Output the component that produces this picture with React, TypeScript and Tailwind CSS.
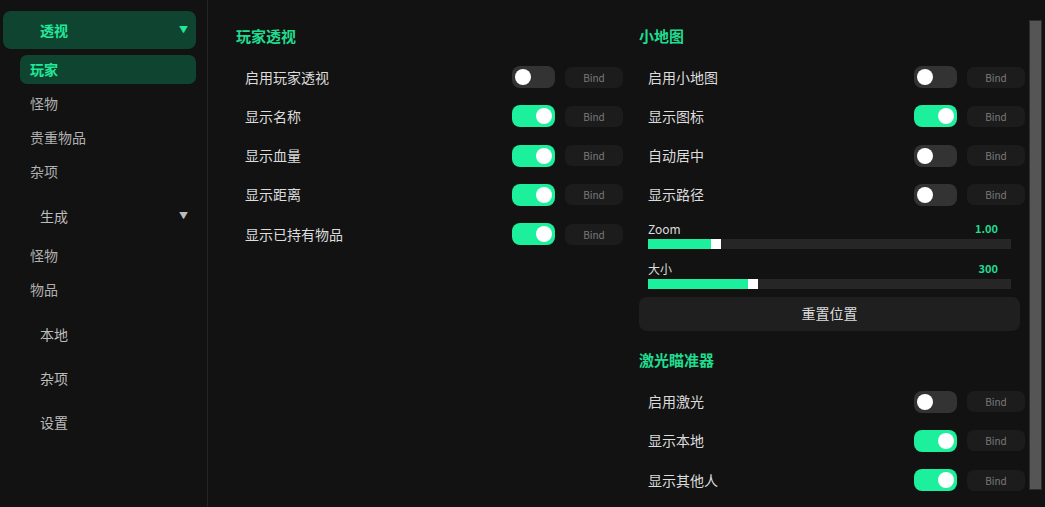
import React from "react";

const font = { fontFamily: '"Noto Sans CJK SC", "Noto Sans", sans-serif' };

function Toggle({ on }: { on: boolean }) {
  return (
    <div
      className={`relative w-[43px] h-[22px] rounded-[8px] ${on ? "bg-[#1cf09c]" : "bg-[#333333]"}`}
    >
      <div
        className={`absolute top-[3px] w-[16px] h-[16px] rounded-full bg-white ${on ? "left-[24px]" : "left-[3px]"}`}
      />
    </div>
  );
}

function Row({ label, on }: { label: string; on: boolean }) {
  return (
    <div className="h-[39.25px] flex items-center pl-[9px]">
      <span className="flex-1 text-[14px] text-[#dcdcdc]">{label}</span>
      <Toggle on={on} />
      <div className="ml-[10px] w-[58px] h-[21px] rounded-[7px] bg-[#1c1c1c] flex items-center justify-center text-[10px] text-[#7a7a7a]">
        Bind
      </div>
    </div>
  );
}

function Heading({ children }: { children: React.ReactNode }) {
  return (
    <div className="h-[24px] mb-[9.5px] flex items-center text-[15px] font-bold text-[#1fdc8f]">
      {children}
    </div>
  );
}

function Slider({ label, value, pct }: { label: string; value: string; pct: number }) {
  return (
    <div className="pl-[9px] pr-[14px]">
      <div className="h-[16px] flex items-center justify-between pr-[13px]">
        <span className="text-[12px] text-[#dcdcdc]">{label}</span>
        <span className="text-[11px] font-bold text-[#1fdc8f]">{value}</span>
      </div>
      <div className="mt-[2px] h-[10px] bg-[#262626] flex">
        <div className="h-full bg-[#1cf09c]" style={{ width: `${pct}%` }} />
        <div className="h-full w-[10px] bg-white" />
      </div>
    </div>
  );
}

function TopItem({ label, open, active }: { label: string; open?: boolean; active?: boolean }) {
  return (
    <div
      className={`h-[38px] flex items-center pl-[37px] pr-[8px] rounded-[8px] ${active ? "bg-[#0f4530] text-[#22e89b] font-bold" : "text-[#bdbdbd]"}`}
    >
      <span className="flex-1 text-[14px]">{label}</span>
      {open !== undefined && <span className="text-[9px]">▼</span>}
    </div>
  );
}

function SubItem({ label, active }: { label: string; active?: boolean }) {
  return (
    <div
      className={`h-[29px] flex items-center pl-[10px] rounded-[7px] text-[14px] ${active ? "bg-[#0f4530] text-[#22e89b] font-bold" : "text-[#b0b0b0]"}`}
    >
      {label}
    </div>
  );
}

export default function App() {
  return (
    <div className="w-[1045px] h-[507px] flex bg-[#121212] overflow-hidden" style={font}>
      {/* Sidebar */}
      <div className="w-[208px] shrink-0 border-r border-[#252525] pt-[11px] pl-[3px] pr-[11px] flex flex-col gap-[6px]">
        <TopItem label="透视" open active />
        <div className="flex flex-col gap-[5px] pl-[17px] mb-[5px]">
          <SubItem label="玩家" active />
          <SubItem label="怪物" />
          <SubItem label="贵重物品" />
          <SubItem label="杂项" />
        </div>
        <TopItem label="生成" open />
        <div className="flex flex-col gap-[5px] pl-[17px] mb-[5px]">
          <SubItem label="怪物" />
          <SubItem label="物品" />
        </div>
        <TopItem label="本地" />
        <TopItem label="杂项" />
        <TopItem label="设置" />
      </div>

      {/* Main */}
      <div className="flex-1 flex pl-[28px]">
        <div className="w-[387px] pt-[24px]">
          <Heading>玩家透视</Heading>
          <Row label="启用玩家透视" on={false} />
          <Row label="显示名称" on />
          <Row label="显示血量" on />
          <Row label="显示距离" on />
          <Row label="显示已持有物品" on />
        </div>

        <div className="w-[386px] ml-[16px] pt-[24px]">
          <Heading>小地图</Heading>
          <Row label="启用小地图" on={false} />
          <Row label="显示图标" on />
          <Row label="自动居中" on={false} />
          <Row label="显示路径" on={false} />
          <div className="mt-[6px]">
            <Slider label="Zoom" value="1.00" pct={17.4} />
          </div>
          <div className="mt-[12px]">
            <Slider label="大小" value="300" pct={27.5} />
          </div>
          <div className="mt-[8px] mr-[5px] h-[34px] rounded-[8px] bg-[#1f1f1f] flex items-center justify-center text-[14px] text-[#dcdcdc]">
            重置位置
          </div>
          <div className="mt-[18px]">
            <Heading>激光瞄准器</Heading>
          </div>
          <Row label="启用激光" on={false} />
          <Row label="显示本地" on />
          <Row label="显示其他人" on />
        </div>

        <div className="ml-[4px] mt-[20px] w-[13px] h-[470px] bg-[#555555] border border-[#2e2e2e]" />
      </div>
    </div>
  );
}
